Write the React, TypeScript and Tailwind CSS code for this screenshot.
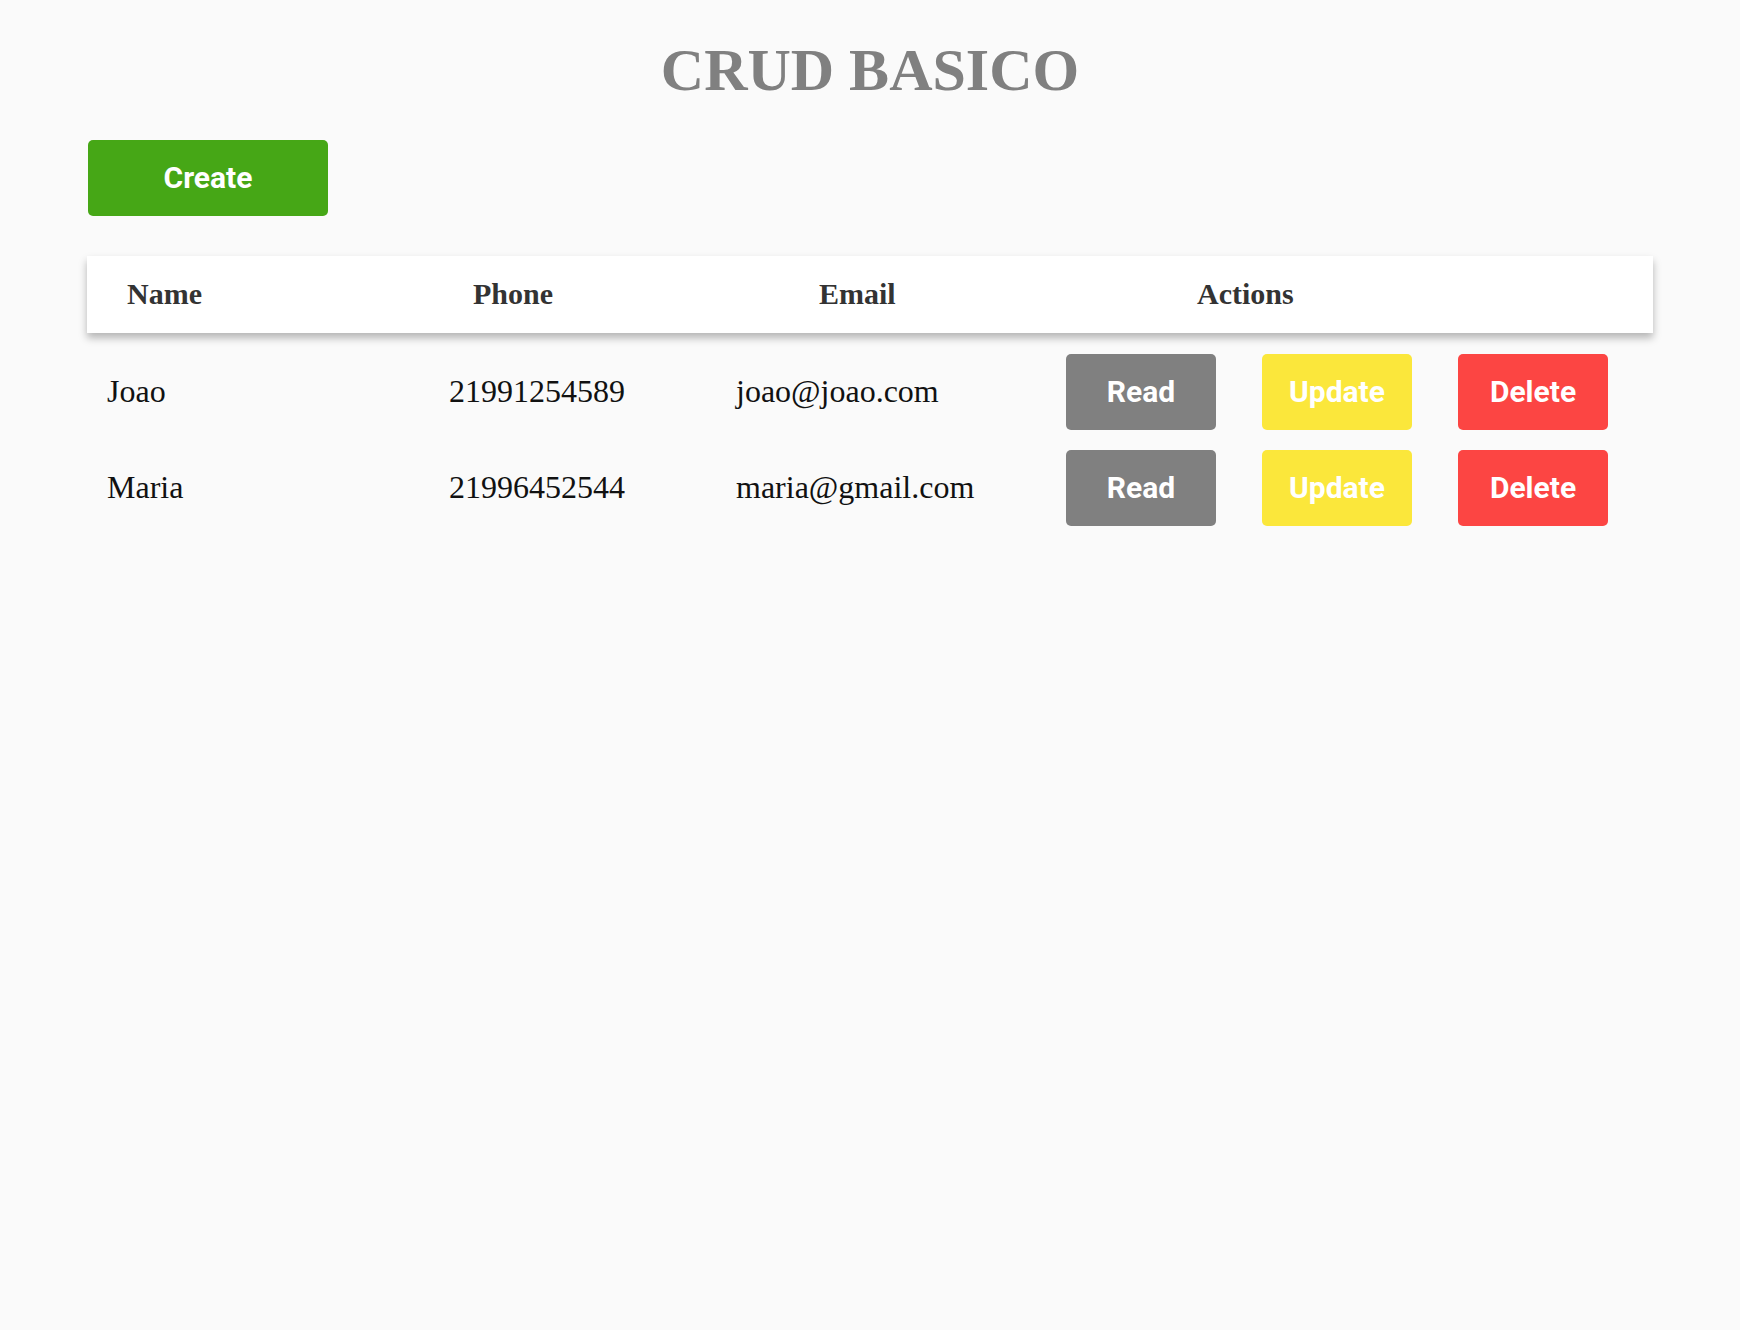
import React from "react";

const rows = [
  { name: "Joao", phone: "21991254589", email: "joao@joao.com" },
  { name: "Maria", phone: "21996452544", email: "maria@gmail.com" },
];

function Btn({ label, cls }: { label: string; cls: string }) {
  return (
    <button
      className={`w-[150px] h-[76px] rounded-[5px] text-white text-[30px] font-bold leading-none font-['Roboto',sans-serif] ${cls}`}
    >
      {label}
    </button>
  );
}

export default function App() {
  return (
    <div className="min-h-[1330px] bg-[#fafafa] pt-[40px]">
      <h1 className="text-center text-[60px] leading-none font-bold text-[#808080] font-['Liberation_Serif',serif]">
        CRUD BASICO
      </h1>
      <div className="w-[90%] mx-auto">
        <button className="mt-[40px] ml-[1px] w-[240px] h-[76px] rounded-[5px] bg-[#46a716] text-white text-[30px] font-bold leading-none font-['Roboto',sans-serif]">
          Create
        </button>
        <div className="mt-[40px] h-[77px] pb-[2px] bg-white shadow-[0_5px_8px_rgba(0,0,0,0.28)] grid grid-cols-[346px_346px_378px_auto] items-center pl-[40px] text-[30px] font-bold leading-none text-[#333] font-['Liberation_Serif',serif]">
          <div>Name</div>
          <div>Phone</div>
          <div>Email</div>
          <div>Actions</div>
        </div>
        <div className="mt-[21px] flex flex-col gap-[20px] text-[32px] leading-none text-[#111] font-['Liberation_Serif',serif]">
          {rows.map((r) => (
            <div
              key={r.name}
              className="grid grid-cols-[342px_287px_330px_auto] items-center pl-[20px]"
            >
              <div className="pb-[2px]">{r.name}</div>
              <div className="pb-[2px]">{r.phone}</div>
              <div className="pb-[2px]">{r.email}</div>
              <div className="flex gap-[46px]">
                <Btn label="Read" cls="bg-[#808080]" />
                <Btn label="Update" cls="bg-[#fbe73b]" />
                <Btn label="Delete" cls="bg-[#fc4543]" />
              </div>
            </div>
          ))}
        </div>
      </div>
    </div>
  );
}
